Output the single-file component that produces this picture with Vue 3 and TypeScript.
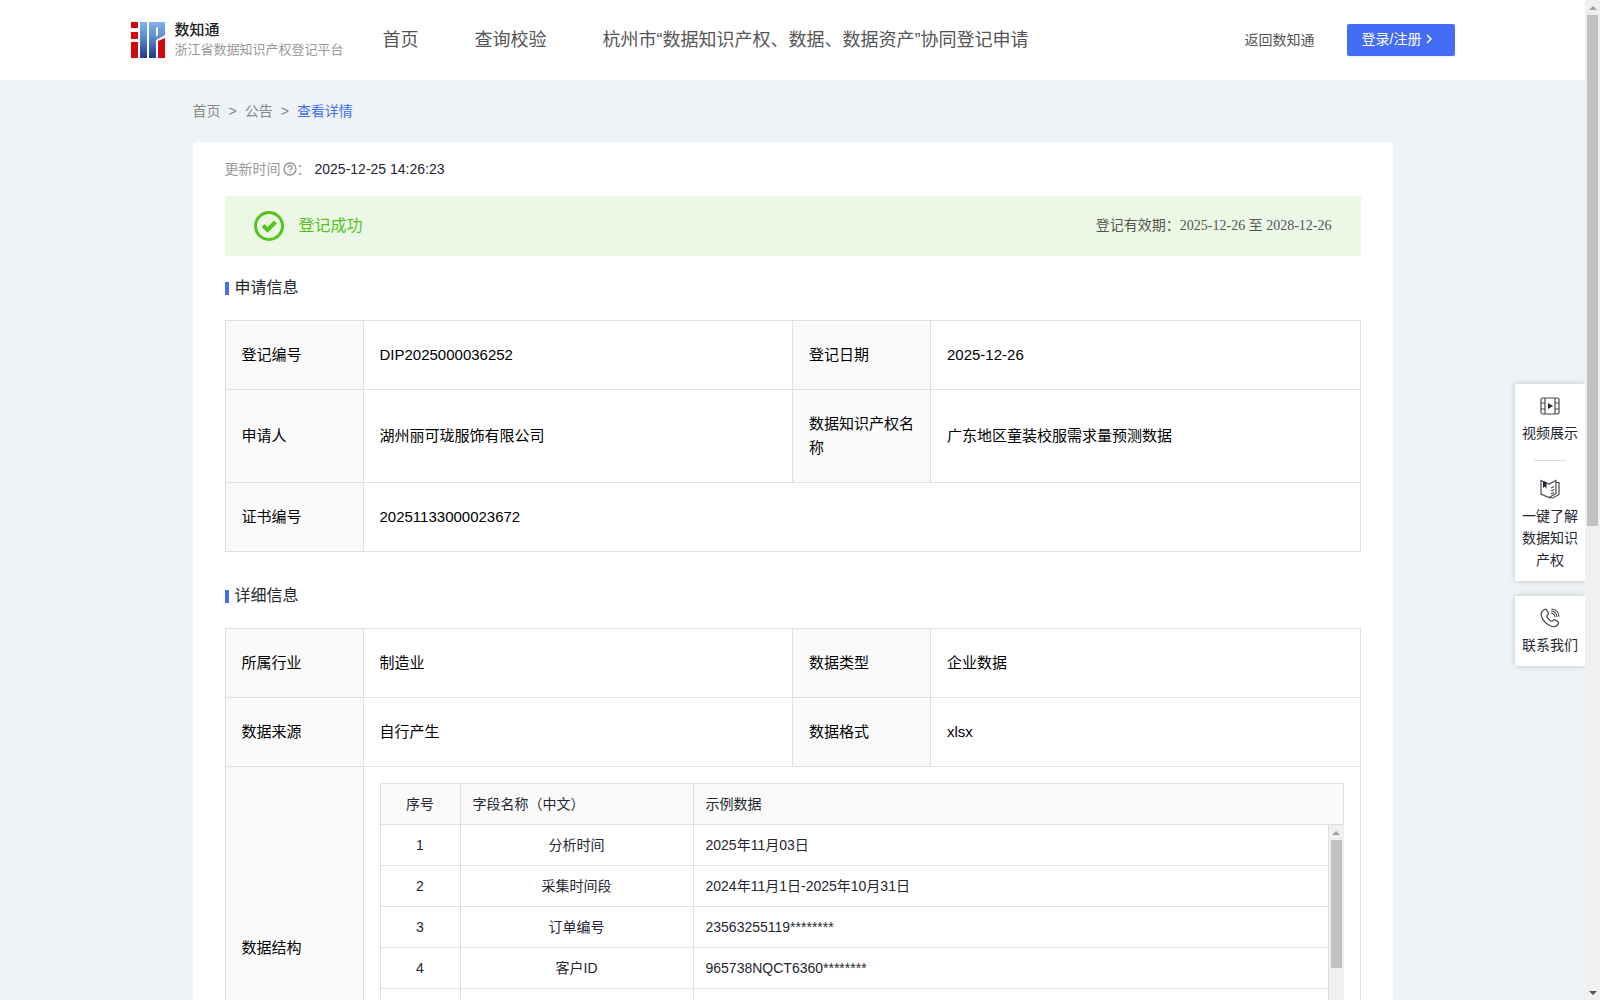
<script setup lang="ts">
interface Cell {
  label: string
  value: string
  span?: number
}

interface Field {
  no: string
  name: string
  sample: string
}

const navItems: string[] = ['首页', '查询校验', '杭州市“数据知识产权、数据、数据资产”协同登记申请']

const applyRows: Cell[][] = [
  [
    { label: '登记编号', value: 'DIP2025000036252' },
    { label: '登记日期', value: '2025-12-26' },
  ],
  [
    { label: '申请人', value: '湖州丽可珑服饰有限公司' },
    { label: '数据知识产权名称', value: '广东地区童装校服需求量预测数据' },
  ],
  [{ label: '证书编号', value: '20251133000023672', span: 3 }],
]

const detailRows: Cell[][] = [
  [
    { label: '所属行业', value: '制造业' },
    { label: '数据类型', value: '企业数据' },
  ],
  [
    { label: '数据来源', value: '自行产生' },
    { label: '数据格式', value: 'xlsx' },
  ],
]

const emptyRow: Field = { no: '', name: '', sample: '' }

const fields: Field[] = [
  { no: '1', name: '分析时间', sample: '2025年11月03日' },
  { no: '2', name: '采集时间段', sample: '2024年11月1日-2025年10月31日' },
  { no: '3', name: '订单编号', sample: '23563255119********' },
  { no: '4', name: '客户ID', sample: '965738NQCT6360********' },
  emptyRow,
  emptyRow,
  emptyRow,
]
</script>

<template>
  <div class="shell">
    <div class="page">
      <header class="header">
        <div class="header-inner">
          <a class="brand" href="#">
            <svg class="logo" viewBox="0 0 34 36" aria-hidden="true">
              <defs>
                <linearGradient id="logo-blue" x1="0" y1="0" x2="0" y2="36" gradientUnits="userSpaceOnUse">
                  <stop offset="0" stop-color="#82b4ea" />
                  <stop offset="0.4" stop-color="#5a8fd2" />
                  <stop offset="1" stop-color="#1f3a85" />
                </linearGradient>
              </defs>
              <path fill="#d20a10" d="M0 0h7v6H0zM0 10h7v7H0zM0 20h7v16H0zM27 19l7-3v20h-7z" />
              <path fill="url(#logo-blue)" d="M9 0h7v36H9z" />
              <path fill="url(#logo-blue)" fill-rule="evenodd" d="M18 0h16v13l-9 5v18h-7zM25 6v9l2-2V5z" />
            </svg>
            <span class="brand-text">
              <strong>数知通</strong>
              <span>浙江省数据知识产权登记平台</span>
            </span>
          </a>
          <nav class="nav">
            <a v-for="item in navItems" :key="item" href="#">{{ item }}</a>
          </nav>
          <a class="back" href="#">返回数知通</a>
          <button class="login" type="button">
            登录/注册
            <svg viewBox="0 0 10 10" aria-hidden="true"><path d="M3 1l4 4-4 4" /></svg>
          </button>
        </div>
      </header>

      <main class="main">
        <nav class="crumbs" aria-label="breadcrumb">
          <a href="#">首页</a>
          <span>&gt;</span>
          <a href="#">公告</a>
          <span>&gt;</span>
          <a class="current" href="#">查看详情</a>
        </nav>

        <section class="card">
          <div class="updated">
            <span class="updated-label">更新时间</span>
            <svg viewBox="0 0 14 14" aria-hidden="true">
              <circle cx="7" cy="7" r="6" />
              <path d="M5 5.600a2 1.900 0 1 1 3 1.600q-1 .5-1 1.300M7 9.600v1.100" />
            </svg>
            <span class="updated-label colon">：</span>
            <time>2025-12-25 14:26:23</time>
          </div>

          <div class="banner">
            <svg viewBox="0 0 30 30" aria-hidden="true">
              <circle cx="15" cy="15" r="13.500" />
              <path class="tick" d="M9 14.500l4.500 4.500 8-8" />
            </svg>
            <span class="status">登记成功</span>
            <span class="period">登记有效期：2025-12-26 至 2028-12-26</span>
          </div>

          <h2>申请信息</h2>
          <table class="info">
            <colgroup><col class="key" /><col /><col class="key" /><col /></colgroup>
            <tbody>
              <tr v-for="(row, i) in applyRows" :key="i">
                <template v-for="cell in row" :key="cell.label">
                  <th scope="row">{{ cell.label }}</th>
                  <td :colspan="cell.span">{{ cell.value }}</td>
                </template>
              </tr>
            </tbody>
          </table>

          <h2>详细信息</h2>
          <table class="info">
            <colgroup><col class="key" /><col /><col class="key" /><col /></colgroup>
            <tbody>
              <tr v-for="(row, i) in detailRows" :key="i">
                <template v-for="cell in row" :key="cell.label">
                  <th scope="row">{{ cell.label }}</th>
                  <td>{{ cell.value }}</td>
                </template>
              </tr>
              <tr>
                <th scope="row">数据结构</th>
                <td class="holder" colspan="3">
                  <table class="fields">
                    <colgroup><col class="no" /><col class="name" /><col /></colgroup>
                    <thead>
                      <tr>
                        <th class="mid" scope="col">序号</th>
                        <th scope="col">字段名称（中文）</th>
                        <th scope="col">示例数据</th>
                      </tr>
                    </thead>
                  </table>
                  <div class="body">
                    <table class="fields">
                      <colgroup><col class="no" /><col class="name" /><col /></colgroup>
                      <tbody>
                        <tr v-for="(field, i) in fields" :key="i">
                          <td class="mid">{{ field.no }}</td>
                          <td class="mid">{{ field.name }}</td>
                          <td>{{ field.sample }}</td>
                        </tr>
                      </tbody>
                    </table>
                    <div class="bar" aria-hidden="true">
                      <i class="up"></i>
                      <div class="track"><div class="thumb half"></div></div>
                      <i class="down"></i>
                    </div>
                  </div>
                </td>
              </tr>
            </tbody>
          </table>
        </section>
      </main>
    </div>

    <aside class="side">
      <div class="side-box">
        <a href="#">
          <svg viewBox="0 0 20 20" aria-hidden="true">
            <rect x="1" y="2" width="18" height="16" rx="2" />
            <path d="M5 2v16M15 2v16M1 7h4M1 13h4M15 7h4M15 13h4" />
            <path class="solid" d="M8 7l5 3-5 3z" />
          </svg>
          视频展示
        </a>
        <hr />
        <a href="#">
          <svg viewBox="0 0 20 20" aria-hidden="true">
            <path d="M1 1.500l8 3.500 7-3.500v13L9 18.500l-8-3.500zM16 3.500h3v12l-6 3.500-4-.5M11 9l3-1.500M11 12l3-1.500M11 15l3-1.500" />
            <path class="solid" d="M3 2v7l2-1.500L6.500 10V3.500z" />
          </svg>
          一键了解<br />数据知识<br />产权
        </a>
      </div>
      <div class="side-box">
        <a href="#">
          <svg viewBox="0 0 20 20" aria-hidden="true">
            <path d="M4.500 1.500c1-.6 1.700-.2 2.300.7l1.400 2.400c.5 1 .2 1.600-.5 2.200-1 .8-1.200 1.500-.5 2.600 1 1.600 2 2.600 3.500 3.500 1 .6 1.700.4 2.400-.5.7-.8 1.300-1 2.200-.5l2.400 1.500c.9.6 1.200 1.300.6 2.300-1.500 2.800-4.300 3.600-7.500 2.300C6.500 16.300 3.200 13 1.600 8.800.500 5.600 1.600 3 4.500 1.500zM11 5q3.500.5 4 4M11 3q5.500.5 6 6M11.500 1q7 .8 7.500 7.500" />
          </svg>
          联系我们
        </a>
      </div>
    </aside>

    <div class="bar" aria-hidden="true">
      <i class="up"></i>
      <div class="track"><div class="thumb"></div></div>
      <i class="down"></i>
    </div>
  </div>
</template>

<style>
body {
  margin: 0;
  overflow: hidden;
}
</style>

<style scoped>
* {
  box-sizing: border-box;
}

a {
  color: inherit;
  text-decoration: none;
}

.shell {
  position: relative;
  display: flex;
  height: 100vh;
  background: #eef3f6;
  color: #252632;
  font-family: "Liberation Sans", "Noto Sans CJK SC", sans-serif;
  font-size: 14px;
  line-height: 22px;
}

.page {
  flex: 1;
  min-width: 0;
  overflow-y: auto;
  scrollbar-width: none;
}

.header {
  background: #fff;
}

.header-inner {
  display: flex;
  align-items: center;
  max-width: 1324px;
  height: 80px;
  margin: 0 auto;
  color: #555;
}

.brand {
  display: flex;
  align-items: center;
  gap: 10px;
  width: 252px;
}

.logo {
  width: 34px;
  height: 36px;
}

.brand-text {
  display: flex;
  flex-direction: column;
  color: #999;
  font-size: 13px;
  line-height: 20px;
  white-space: nowrap;
}

.brand-text strong {
  color: #222;
  font-size: 15px;
  font-weight: 500;
}

.nav {
  display: flex;
  flex: 1;
  gap: 56px;
  font-size: 18px;
  white-space: nowrap;
}

.back {
  margin-right: 32px;
}

.login {
  display: flex;
  align-items: center;
  gap: 3px;
  width: 108px;
  height: 32px;
  padding: 0 15px 2px;
  border: 0;
  border-radius: 2px;
  background: #446df6;
  box-shadow: 0 2px 0 rgba(0, 0, 0, 0.045);
  color: #fff;
  font: inherit;
  white-space: nowrap;
}

.login svg {
  width: 10px;
  height: 10px;
  fill: none;
  stroke: #fff;
  stroke-width: 1.5;
}

.main {
  max-width: 1200px;
  margin: 0 auto;
}

.crumbs {
  display: flex;
  gap: 8px;
  padding: 20px 0;
  color: #888;
}

.crumbs .current {
  color: #446df6;
}

.card {
  padding: 16px 32px 32px;
  border-radius: 4px;
  background: #fff;
}

.updated {
  display: flex;
  align-items: center;
}

.updated svg {
  width: 14px;
  height: 14px;
  margin-left: 2px;
  fill: none;
  stroke: #909090;
  stroke-width: 1.3;
}

.updated-label {
  color: #999;
}

.colon {
  width: 18px;
}

.banner {
  display: flex;
  align-items: center;
  height: 60px;
  margin-top: 16px;
  padding: 0 29px;
  background: #ebf8e6;
}

.banner svg {
  width: 30px;
  height: 30px;
  margin-right: 15px;
  fill: none;
  stroke: #52c41a;
  stroke-width: 3;
}

.banner .tick {
  stroke-width: 4;
}

.status {
  flex: 1;
  color: #52c41a;
  font-size: 16px;
}

.period {
  color: #555;
  font-family: "Liberation Serif", "Noto Sans CJK SC", serif;
}

h2 {
  display: flex;
  align-items: center;
  gap: 6px;
  margin: 20px 0;
  font-size: 16px;
  font-weight: 400;
  line-height: 24px;
}

h2::before {
  width: 4px;
  height: 13px;
  background: #446df6;
  content: "";
}

.info + h2 {
  margin-top: 32px;
}

table {
  width: 100%;
  border-collapse: collapse;
  table-layout: fixed;
}

th,
td {
  border: 1px solid #e0e0e0;
  font-weight: 400;
  text-align: left;
}

th {
  background: #fafafa;
}

.key {
  width: 138px;
}

.info {
  color: #000;
  font-size: 15px;
  line-height: 24px;
}

.info th,
.info td {
  padding: 22px 16px;
}

.info .holder {
  padding: 16px;
}

.info .fields {
  color: #252632;
  font-size: 14px;
}

.info .fields th,
.info .fields td {
  height: 41px;
  padding: 8px 12px;
}

.info .fields .mid {
  text-align: center;
}

.no {
  width: 80px;
}

.name {
  width: 233px;
}

.body {
  display: flex;
  margin-top: -1px;
}

.body .fields {
  flex: 1;
  min-width: 0;
}

.body .bar {
  margin-top: 1px;
}

.bar {
  display: flex;
  flex: 0 0 15px;
  flex-direction: column;
  align-items: center;
  background: #f0f0f0;
}

.track {
  flex: 1;
  width: 11px;
}

.thumb {
  height: 52.7%;
  background: #c1c1c1;
}

.body .half {
  height: 128px;
}

.bar i {
  display: flex;
  align-items: center;
  height: 15px;
}

.bar i::before {
  border: 4px solid transparent;
  content: "";
}

.bar .up::before {
  border-top: 0;
  border-bottom-color: #a3a3a3;
}

.bar .down::before {
  border-bottom: 0;
  border-top-color: #505050;
}

.side {
  position: absolute;
  top: 384px;
  right: 15px;
  display: flex;
  flex-direction: column;
  gap: 15px;
  width: 70px;
}

.side-box {
  padding: 12px 0 10px;
  background: #fff;
  box-shadow: 0 0 6px rgba(0, 0, 0, 0.2);
  clip-path: inset(-8px 0 -8px -8px);
  text-align: center;
}

.side-box a {
  display: block;
}

.side-box svg {
  display: block;
  width: 20px;
  height: 20px;
  margin: 0 auto 6px;
  fill: none;
  stroke: #484850;
  stroke-width: 1.2;
}

.side-box .solid {
  fill: #252632;
  stroke: none;
}

.side-box hr {
  width: 32px;
  height: 1px;
  margin: 16px auto 18px;
  border: 0;
  background: #ddd;
}
</style>
